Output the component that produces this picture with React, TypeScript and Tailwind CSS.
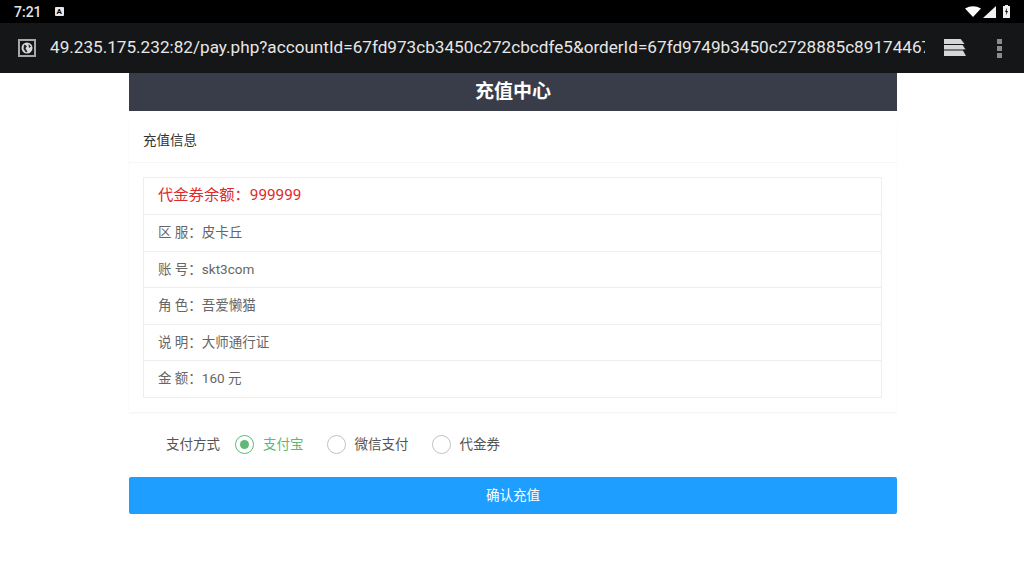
import { useState } from "react";

const cjk = "font-['Roboto','Noto_Sans_CJK_SC',sans-serif]";

const rows = [
  { label: "区 服", value: "皮卡丘" },
  { label: "账 号", value: "skt3com" },
  { label: "角 色", value: "吾爱懒猫" },
  { label: "说 明", value: "大师通行证" },
  { label: "金 额", value: "160 元" },
];

const methods = ["支付宝", "微信支付", "代金券"];

function StatusBar() {
  return (
    <div className="h-[23px] bg-black flex items-center justify-between pl-[14px] pr-[14px] text-[#e4e4e4]">
      <div className="flex items-center gap-[13px]">
        <span className="text-[14px] font-medium leading-none">7:21</span>
        <span className="w-[9px] h-[9px] bg-[#e8e8e8] rounded-[1px] flex items-center justify-center text-black text-[8px] font-bold leading-none">
          A
        </span>
      </div>
      <div className="flex items-center gap-[2px]">
        <svg width="16" height="11" viewBox="0 0 16 11">
          <path d="M0 2.5 Q8 -2 16 2.5 L8 11 Z" fill="#fff" />
        </svg>
        <svg width="13" height="12" viewBox="0 0 13 12">
          <path d="M13 0 V12 H0 Z" fill="#f0f0f0" />
        </svg>
        <svg width="7" height="13" viewBox="0 0 7 13" className="ml-[5px]">
          <path d="M2 0 H5 V1 H7 V13 H0 V1 H2 Z" fill="#f0f0f0" />
          <path d="M4.2 2.5 L2 7 H3.4 L2.8 10.5 L5 6 H3.6 Z" fill="#000" />
        </svg>
      </div>
    </div>
  );
}

function AddressBar() {
  return (
    <div className="h-[50px] bg-[#151617] flex items-center pl-[18px] text-[#e6e6e6]">
      <div className="w-[18px] h-[18px] border-2 border-[#a8a8a8] flex items-center justify-center shrink-0">
        <svg width="12" height="12" viewBox="0 0 12 12">
          <circle cx="6" cy="6" r="5.5" fill="#d8d8d8" />
          <path d="M3 2.5 L6 4 L4.5 6.5 L6.5 9.5 L5 10.5 L2.5 7 Z M7.5 2 L10 4.5 L8 6 Z" fill="#222" />
        </svg>
      </div>
      <div className="w-[875px] ml-[14px] overflow-hidden whitespace-nowrap text-[17.15px] leading-none">
        49.235.175.232:82/pay.php?accountId=67fd973cb3450c272cbcdfe5&orderId=67fd9749b3450c2728885c8917446789
      </div>
      <svg width="24" height="18" viewBox="0 0 24 18" className="ml-[18px] shrink-0">
        <path d="M1 0 H18 L22 5 H1 Z" fill="#d6d6d6" />
        <path d="M1 6 H20 L23 10.5 H1 Z" fill="#d6d6d6" />
        <path d="M1 11.5 H20 L23 17 H1 Z" fill="#d6d6d6" />
        <path d="M18 0 L22 5 L20 6 M20 6 L23 10.5 L20 11.5" stroke="#151617" strokeWidth="0.8" fill="none" />
      </svg>
      <div className="ml-[30px] flex flex-col gap-[2px] shrink-0">
        <span className="w-[5px] h-[5px] bg-[#8c8c8c]" />
        <span className="w-[5px] h-[5px] bg-[#8c8c8c]" />
        <span className="w-[5px] h-[5px] bg-[#8c8c8c]" />
      </div>
    </div>
  );
}

export default function App() {
  const [selected, setSelected] = useState(0);

  return (
    <div className={`w-[1024px] h-[576px] overflow-hidden bg-white ${cjk}`}>
      <StatusBar />
      <AddressBar />
      <div className="w-[768px] ml-[129px]">
        <div className="h-[38px] bg-[#393d49] text-white text-[19px] font-bold flex items-center justify-center">
          充值中心
        </div>
        <div className="mt-[10px] h-[291px] shadow-[0_1px_2px_rgba(0,0,0,0.05)]">
          <div className="h-[42px] pb-[3px] border-b border-[#f6f6f6] flex items-center pl-[14px] text-[13.5px] text-[#333]">
            充值信息
          </div>
          <div className="ml-[14px] mr-[15px] mt-[14px] border border-[#eeeeee]">
            <div className="h-[36px] flex items-center pl-[14px] pb-[1px] text-[15.3px] text-[#e02a2a]">
              代金券余额：999999
            </div>
            {rows.map((row) => (
              <div
                key={row.label}
                className="h-[36.5px] border-t border-[#eeeeee] flex items-center pl-[14px] pb-[1px] text-[13.5px] text-[#666]"
              >
                {row.label}：{row.value}
              </div>
            ))}
          </div>
        </div>
        <div className="mt-[19px] h-[26px] flex items-center pl-[37px] text-[13.5px] text-[#555]">
          <span className="mr-[15px]">支付方式</span>
          {methods.map((method, i) => (
            <button
              key={method}
              onClick={() => setSelected(i)}
              className={`flex items-center gap-[9px] mr-[23px] ${
                selected === i ? "text-[#5fb878]" : "text-[#555]"
              }`}
            >
              <span
                className={`w-[19px] h-[19px] rounded-full border flex items-center justify-center ${
                  selected === i ? "border-[#5fb878]" : "border-[#c2c2c2]"
                }`}
              >
                {selected === i && <span className="w-[9px] h-[9px] rounded-full bg-[#5fb878]" />}
              </span>
              {method}
            </button>
          ))}
        </div>
        <button className="mt-[20px] w-full h-[37px] bg-[#1e9fff] rounded-[2px] text-white text-[13.5px]">
          确认充值
        </button>
      </div>
    </div>
  );
}
